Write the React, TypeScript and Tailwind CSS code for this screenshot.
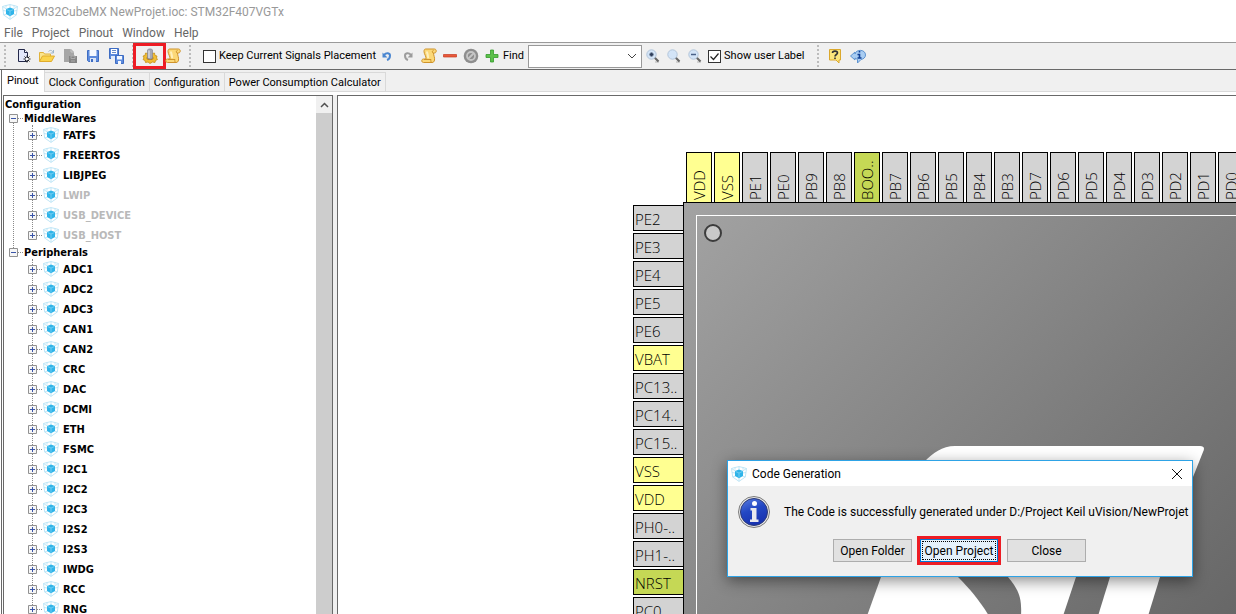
import { useState, type ReactNode } from 'react';
import { clsx } from 'clsx';

const menus = ['File', 'Project', 'Pinout', 'Window', 'Help'];

const tabs = ['Pinout', 'Clock Configuration', 'Configuration', 'Power Consumption Calculator'];

const tree = [
  {
    name: 'MiddleWares',
    items: ['FATFS', 'FREERTOS', 'LIBJPEG', 'LWIP', 'USB_DEVICE', 'USB_HOST'],
    disabled: ['LWIP', 'USB_DEVICE', 'USB_HOST'],
  },
  {
    name: 'Peripherals',
    items: [
      'ADC1', 'ADC2', 'ADC3', 'CAN1', 'CAN2', 'CRC', 'DAC', 'DCMI', 'ETH', 'FSMC',
      'I2C1', 'I2C2', 'I2C3', 'I2S2', 'I2S3', 'IWDG', 'RCC', 'RNG',
    ],
    disabled: [],
  },
];

const topPins = [
  'VDD', 'VSS', 'PE1', 'PE0', 'PB9', 'PB8', 'BOO..', 'PB7', 'PB6', 'PB5',
  'PB4', 'PB3', 'PD7', 'PD6', 'PD5', 'PD4', 'PD3', 'PD2', 'PD1', 'PD0',
];

const leftPins = [
  'PE2', 'PE3', 'PE4', 'PE5', 'PE6', 'VBAT', 'PC13..', 'PC14..', 'PC15..',
  'VSS', 'VDD', 'PH0-..', 'PH1-..', 'NRST', 'PC0',
];

function pinColor(name: string) {
  if (['VDD', 'VSS', 'VBAT'].includes(name)) return 'bg-[#ffff91]';
  if (['BOO..', 'NRST'].includes(name)) return 'bg-[#c5d855]';
  return 'bg-[#d3d3d3]';
}

function CubeIcon() {
  return (
    <svg width="16" height="16" viewBox="0 0 16 16" fill="none" className="shrink-0">
      <path d="M.5 2.500 4 1.500 8 .6l4 .9 3.500 1-1.200 8.500L8 15.400 1.700 11z" stroke="#b9e3f5" strokeWidth=".9" />
      <path d="M.5 2.500 4.500 5M15.500 2.500 11.500 5M8 .7v3M8 12v3.300M1.700 11l2.800-1M14.300 11l-2.800-1M1 6.500l3 .5M15 6.500l-3 .5M4 1.500v2M12 1.500v2" stroke="#b9e3f5" strokeWidth=".9" />
      <path d="M8 3.500 12 5v5L8 12.300 4 10V5z" fill="#2fb4e9" />
      <path d="M4.500 5.500 8 7l3.500-1.500M8 7v4.500" stroke="#7fd2f2" strokeWidth=".8" />
    </svg>
  );
}

function NewIcon() {
  return (
    <svg width="16" height="16" viewBox="0 0 16 16" fill="none">
      <path d="M2.500 1.500h6l3 3v9h-9z" fill="#e3e8fa" stroke="#23284a" />
      <path d="M8.500 1.500v3h3" fill="#fff" stroke="#23284a" />
      <path d="M11 7.500v7M7.500 11h7M8.500 8.500l5 5M13.500 8.500l-5 5" stroke="#222" />
      <circle cx="11" cy="11" r="1.300" fill="#fff" />
    </svg>
  );
}

function FolderIcon() {
  return (
    <svg width="18" height="16" viewBox="0 0 18 16" fill="none">
      <path d="M1.500 13V4.500h4l1 1.500h6v2" fill="#fbe58d" stroke="#e0b23a" />
      <path d="M1.500 13.500 4.500 8h12l-3 5.500z" fill="#fbd44c" stroke="#e0ac2c" />
      <path d="M10.500 3.500c2-2 4-1 4.500 1M15.500 2v3h-3" stroke="#9db5c9" />
    </svg>
  );
}

function ReportIcon() {
  return (
    <svg width="16" height="16" viewBox="0 0 16 16" fill="none">
      <path d="M2 1h7l3 3v10H2z" fill="#a6a6a6" />
      <path d="M9 1v3h3" stroke="#c9c9c9" />
      <path d="M7 8h8v7H7z" fill="#858585" />
      <path d="M9 8h4v2.500H9zM9 13h4" stroke="#adadad" />
    </svg>
  );
}

function SaveIcon() {
  return (
    <svg width="14" height="14" viewBox="0 0 14 14" fill="none">
      <path d="M1.500 1.500h11v11h-10l-1-1z" fill="#5d8bdd" stroke="#3e6cc2" />
      <path d="M3.500 1h7v6h-7z" fill="#f5f9ff" />
      <path d="M4 9h6v4H4z" fill="#dce6f7" />
      <path d="M5 10h2v3H5z" fill="#3e6cc2" />
    </svg>
  );
}

function SaveAllIcon() {
  return (
    <svg width="16" height="16" viewBox="0 0 16 16" fill="none">
      <path d="M1.500.5h9v10h-9z" fill="#5d8bdd" stroke="#3e6cc2" />
      <path d="M3 1h6v5H3z" fill="#fff" />
      <path d="M4 2.500h4M4 4.500h4" stroke="#6a8cc8" />
      <path d="M3 8h5v3H3z" fill="#e3ecfa" />
      <path d="M7.500 7.500h8v8h-8z" fill="#5d8bdd" stroke="#3e6cc2" />
      <path d="M9 8h5v3.500H9zM10 13h3v3h-3z" fill="#f5f9ff" />
    </svg>
  );
}

function GearIcon() {
  return (
    <svg width="16" height="16" viewBox="0 0 16 16" fill="none">
      <path
        d="m1 8 2-.5L3.500 5l2.500.5L8 4l2 1.500 2.500-.5.5 2.500L15 8l-.5 2 1 1.500-2 1-.5 2-2.500-.5L8 15.500 6 14l-2.500.5-.5-2-2-1L2 10z"
        fill="#f0bd34"
        stroke="#c48f16"
        strokeWidth=".8"
      />
      <ellipse cx="8" cy="10" rx="3.500" ry="2" fill="#b47f18" />
      <path d="M5.500 2c0-1.500 5-1.500 5 0v8c0 1.500-5 1.500-5 0z" fill="#a7a9b5" stroke="#858795" strokeWidth=".7" />
      <path d="M7 2.500v7.500" stroke="#e2e3ea" strokeWidth="1.200" />
    </svg>
  );
}

function ScrollIcon() {
  return (
    <svg width="16" height="16" viewBox="0 0 16 16" fill="none">
      <path d="M4.500 1h9c2.300 0 2.300 4 0 4H12.500c0 2.500 1.500 4.500 1 7-.3 1.700-1 2.500-2.500 2.500H2.500c-2.300 0-2.300-3.500 0-3.500H5c.5-2.500-2-5-2-7.500C3 2 3.500 1 4.500 1z" fill="#fbd878" stroke="#cf932a" />
      <path d="M12.500 5c-1.700 0-1.500-2.500 0-2.500M3 11.500h7c-.5 1.500 0 3 1 3" stroke="#cf932a" />
      <path d="M6 3.500c0 2 1.500 4 1 6.500" stroke="#fff0bd" strokeWidth="2" />
    </svg>
  );
}

function TurnIcon({ redo }: { redo?: boolean }) {
  return (
    <svg width="10" height="10" viewBox="0 0 10 10" fill="none" className={clsx(redo && '-scale-x-100')}>
      <path d="M2 4c2.500-3 6-2 6 .5C8 7 6.500 8.500 5 9" stroke={redo ? '#9c9c9c' : '#4a86d0'} strokeWidth="2" />
      <path d="M.5 1.500V6.500h5z" fill={redo ? '#9c9c9c' : '#4a86d0'} />
    </svg>
  );
}

function MinusIcon() {
  return (
    <svg width="14" height="14" viewBox="0 0 14 14">
      <path d="M.5 5.500h13v2.500H.5z" fill="#e8593a" stroke="#c73a20" strokeWidth=".7" />
    </svg>
  );
}

function ForbiddenIcon() {
  return (
    <svg width="16" height="16" viewBox="0 0 16 16" fill="none">
      <circle cx="8" cy="8" r="7.300" fill="#8e8e8e" />
      <circle cx="8" cy="8" r="4" stroke="#c6c6c6" strokeWidth="1.800" />
      <path d="m5 11 6-6" stroke="#c6c6c6" strokeWidth="1.800" />
    </svg>
  );
}

function PlusIcon() {
  return (
    <svg width="14" height="14" viewBox="0 0 14 14">
      <path d="M5.500 1h3v4.500H13v3H8.500V13h-3V8.500H1v-3h4.500z" fill="#5cc04a" stroke="#339a2c" strokeWidth=".8" />
    </svg>
  );
}

function ZoomIcon({ kind }: { kind: 'in' | 'fit' | 'out' }) {
  return (
    <svg width="14" height="14" viewBox="0 0 14 14" fill="none">
      <path d="M9 13h4" stroke="#c9c9c9" strokeWidth="1.500" />
      <path d="m8.500 8.500 4 4" stroke="#666" strokeWidth="2.200" />
      <circle cx="5.500" cy="5.500" r="4.700" fill="#d3e4f7" stroke="#b3c5da" />
      {kind === 'in' && <path d="M5.500 3.500v4M3.500 5.500h4" stroke="#2f3f5c" strokeWidth="2" />}
      {kind === 'out' && <path d="M3 5.500h5" stroke="#4a6288" strokeWidth="1.500" />}
    </svg>
  );
}

function HelpIcon() {
  return (
    <svg width="14" height="16" viewBox="0 0 14 16" fill="none">
      <path d="M1.500 1.500h11v10.500H11v3l-3-3H1.500z" fill="#fbe57c" stroke="#dba82c" />
      <path d="M4.500 5c0-2.500 5-2.500 5 0 0 1.500-2.500 1.500-2.500 3.500M7 9.500v1.500" stroke="#333" strokeWidth="1.600" />
    </svg>
  );
}

function AboutIcon() {
  return (
    <svg width="16" height="16" viewBox="0 0 16 16" fill="none">
      <path d="M.5 8 5 4v2C6 1 15.500 1 15.500 7c0 2.500-2 4-4.500 4.500L7.500 15v-3.500L5 10v2z" fill="#a9cdf2" stroke="#5d92cf" />
      <path d="M9.500 3v1.600M7.500 6.500h2V10M7.500 10h4" stroke="#123f94" strokeWidth="1.600" />
    </svg>
  );
}

function InfoIcon() {
  return (
    <svg width="32" height="32" viewBox="0 0 32 32" className="shrink-0">
      <defs>
        <linearGradient id="info" x1="0" y1="0" x2="0.400" y2="1">
          <stop offset="0" stopColor="#5c7fe0" />
          <stop offset="0.500" stopColor="#2348c4" />
          <stop offset="1" stopColor="#1833b0" />
        </linearGradient>
      </defs>
      <circle cx="16" cy="16" r="15.500" fill="#e6e6e6" stroke="#7c7c7c" />
      <circle cx="16" cy="16" r="13.500" fill="url(#info)" stroke="#2c3a78" />
      <circle cx="16.500" cy="7.500" r="2.500" fill="#fff" />
      <path d="M12.500 12h6v11.500h2V26h-8.500v-2.500h2v-9h-1.500z" fill="#e8e8ee" />
    </svg>
  );
}

function Grip() {
  return (
    <div className="flex w-[2px] shrink-0 flex-col gap-[2px]">
      {[0, 1, 2, 3, 4, 5].map((n) => (
        <span key={n} className="h-[2px] w-[2px] bg-[#bcbcbc]" />
      ))}
    </div>
  );
}

function ToolButton({ label, narrow, marked, children }: { label: string; narrow?: boolean; marked?: boolean; children: ReactNode }) {
  return (
    <button
      aria-label={label}
      className={clsx('relative flex h-[26px] shrink-0 items-center justify-center', narrow ? 'w-[21px]' : 'w-[23px]')}
    >
      {children}
      {marked && <span className="absolute -inset-x-[5px] inset-y-0 border-3 border-[#ed1c24]" />}
    </button>
  );
}

function Check({ label, checked, onChange }: { label: string; checked: boolean; onChange: () => void }) {
  return (
    <label className="flex shrink-0 items-center gap-[3px] whitespace-nowrap">
      <span className="grid">
        <input
          type="checkbox"
          checked={checked}
          onChange={onChange}
          className="col-start-1 row-start-1 h-[13px] w-[13px] appearance-none border border-[#333] bg-white"
        />
        {checked && (
          <svg width="13" height="13" viewBox="0 0 13 13" fill="none" className="pointer-events-none col-start-1 row-start-1">
            <path d="m2.500 6.500 3 3 5-6" stroke="#222" strokeWidth="1.200" />
          </svg>
        )}
      </span>
      {label}
    </label>
  );
}

function Expander({ open }: { open?: boolean }) {
  return (
    <svg width="9" height="9" viewBox="0 0 9 9" fill="none" className="relative shrink-0">
      <path d="M.5.5h8v8h-8z" fill="#f6f6f6" stroke="#919191" />
      <path d="M2 4.500h5" stroke="#3a55a8" />
      {!open && <path d="M4.500 2v5" stroke="#3a55a8" />}
    </svg>
  );
}

function Tree() {
  return (
    <div className="min-w-0 flex-1 overflow-hidden pt-px pl-px font-['DejaVu_Sans_Condensed','DejaVu_Sans',sans-serif] text-[11px] font-bold">
      <div className="h-[14px] leading-[16px]">Configuration</div>
      <ul>
        {tree.map((group, i) => (
          <li key={group.name} className="relative">
            {i < tree.length - 1 && <span className="absolute top-[7px] -bottom-[7px] left-[8px] border-l border-dotted border-[#8a8a8a]" />}
            <div className="flex h-[14px] items-center pl-[4px] leading-[14px]">
              <Expander open />
              <span className="mr-px w-[5px] border-t border-dotted border-[#8a8a8a]" />
              <span className="pt-px">{group.name}</span>
            </div>
            <ul className="relative">
              <span className="absolute top-0 bottom-[10px] left-[27px] border-l border-dotted border-[#8a8a8a]" />
              {group.items.map((item) => (
                <li
                  key={item}
                  className={clsx('flex h-5 items-center pl-[23px]', group.disabled.includes(item) && 'text-[#b9b9b9]')}
                >
                  <Expander />
                  <span className="mr-px w-[5px] border-t border-dotted border-[#8a8a8a]" />
                  <CubeIcon />
                  <span className="ml-1 pt-[2px] leading-4">{item}</span>
                </li>
              ))}
            </ul>
          </li>
        ))}
      </ul>
    </div>
  );
}

function Chip() {
  return (
    <div className="grid min-w-0 flex-1 grid-cols-[50px_1fr] grid-rows-[50px_1fr] overflow-hidden bg-white pt-[56px] pl-[295px] font-['Open_Sans','Noto_Sans',sans-serif] text-[15px] font-light">
      <div className="col-start-2 flex gap-[2px] overflow-hidden pl-[3px]">
        {topPins.map((pin) => (
          <div
            key={pin}
            className={clsx('flex w-[26px] shrink-0 rotate-180 items-center border border-t-0 border-black pt-[2px] leading-[22px] [writing-mode:vertical-rl]', pinColor(pin))}
          >
            {pin}
          </div>
        ))}
      </div>
      <div className="flex flex-col gap-[2px] overflow-hidden pt-[3px]">
        {leftPins.map((pin) => (
          <div
            key={pin}
            className={clsx('h-[26px] shrink-0 border border-r-0 border-black pl-px leading-[26px]', pinColor(pin))}
          >
            {pin}
          </div>
        ))}
      </div>
      <div className="relative overflow-hidden border-t border-l border-black bg-linear-135 from-[#a3a3a3] to-[#676767] pt-3 pl-3">
        <div className="h-full border-t border-l border-white pt-2 pl-[7px]">
          <div className="h-[18px] w-[18px] rounded-full border-2 border-[#3c3c3c] bg-[#c9c9c9]" />
        </div>
        <svg width="340" height="170" viewBox="866 446 340 170" fill="#fff" className="absolute top-[243px] left-[182px]">
          <path d="M924 462c9-9 18-16 31-16h245c4 0 5 2 3 6l-12 30H910z" />
          <path d="M881 577h77c12 12 22 24 31 39H867z" />
          <path d="M1008 577h68l-13 39h-42c1-18-2-26-13-39z" />
          <path d="M1110 577h50l-12 39h-50z" />
        </svg>
      </div>
    </div>
  );
}

function Dialog() {
  return (
    <div
      role="dialog"
      aria-labelledby="dialog-title"
      className="absolute right-[43px] bottom-[37px] w-[466px] border border-[#2ea3e6] bg-[#f0f0f0] font-[Roboto,'Noto_Sans',sans-serif] text-[12px] shadow-[0_4px_14px_rgba(0,0,0,0.45)]"
    >
      <div className="flex h-[25px] items-center bg-white pr-[9px] pl-[3px]">
        <CubeIcon />
        <h2 id="dialog-title" className="ml-[5px] flex-1">Code Generation</h2>
        <button aria-label="Close dialog">
          <svg width="12" height="12" viewBox="0 0 12 12" stroke="#111">
            <path d="m1 1 10 10M11 1 1 11" />
          </svg>
        </button>
      </div>
      <div className="flex h-[52px] items-center pl-[10px]">
        <InfoIcon />
        <p className="ml-[14px] whitespace-nowrap">The Code is successfully generated under D:/Project Keil uVision/NewProjet</p>
      </div>
      <div className="flex h-[38px] items-start justify-center pr-px">
        <button className="mt-px h-[23px] w-[79px] border border-[#adadad] bg-[#e1e1e1] whitespace-nowrap">Open Folder</button>
        <button className="-mt-[2px] mr-[6px] ml-[5px] border-3 border-[#ed1c24] bg-[#e5f1fb] whitespace-nowrap">
          <span className="flex h-[23px] w-[78px] items-center justify-center border border-[#0078d7] p-px">
            <span className="flex h-full w-full items-center justify-center border border-dotted border-black">Open Project</span>
          </span>
        </button>
        <button className="mt-px h-[23px] w-[79px] border border-[#adadad] bg-[#e1e1e1]">Close</button>
      </div>
    </div>
  );
}

export default function App() {
  const [keepPlacement, setKeepPlacement] = useState(false);
  const [userLabel, setUserLabel] = useState(true);
  const [activeTab, setActiveTab] = useState('Pinout');

  return (
    <div className="relative flex h-screen flex-col overflow-hidden bg-white font-[Roboto,'Noto_Sans',sans-serif] text-[11px] text-black">
      {/* Title and menu */}
      <header className="h-[42px] shrink-0 text-[12px]">
        <div className="flex h-6 items-center pl-[2px] text-[#999]">
          <CubeIcon />
          <h1 className="ml-[5px]">STM32CubeMX NewProjet.ioc: STM32F407VGTx</h1>
        </div>
        <nav className="flex h-[18px] items-center gap-[9px] pl-1 text-[#666]">
          {menus.map((menu) => (
            <button key={menu}>{menu}</button>
          ))}
        </nav>
      </header>

      {/* Toolbar */}
      <div className="flex h-7 shrink-0 items-center border-t border-b border-t-[#9a9a9a] border-b-[#696969] bg-[#f0f0f0] pl-1">
        <Grip />
        <div className="mr-[5px] ml-[6px] flex">
          <ToolButton label="New project"><NewIcon /></ToolButton>
          <ToolButton label="Open project"><FolderIcon /></ToolButton>
          <ToolButton label="Import project"><ReportIcon /></ToolButton>
          <ToolButton label="Save"><SaveIcon /></ToolButton>
          <ToolButton label="Save all"><SaveAllIcon /></ToolButton>
        </div>
        <Grip />
        <div className="mr-[5px] ml-[4px] flex">
          <ToolButton label="Generate code" marked><GearIcon /></ToolButton>
          <ToolButton label="Generate report"><ScrollIcon /></ToolButton>
        </div>
        <Grip />
        <div className="ml-[12px]">
          <Check label="Keep Current Signals Placement" checked={keepPlacement} onChange={() => setKeepPlacement(!keepPlacement)} />
        </div>
        <ToolButton label="Undo" narrow><TurnIcon /></ToolButton>
        <ToolButton label="Redo" narrow><TurnIcon redo /></ToolButton>
        <ToolButton label="Report" narrow><ScrollIcon /></ToolButton>
        <ToolButton label="Remove" narrow><MinusIcon /></ToolButton>
        <ToolButton label="Clear" narrow><ForbiddenIcon /></ToolButton>
        <ToolButton label="Add" narrow><PlusIcon /></ToolButton>
        <label htmlFor="find" className="mr-1 ml-px">Find</label>
        <div className="grid shrink-0 items-center">
          <select id="find" className="col-start-1 row-start-1 h-[23px] w-[114px] appearance-none border border-[#999] bg-white" />
          <svg width="10" height="6" viewBox="0 0 10 6" fill="none" stroke="#444" className="pointer-events-none col-start-1 row-start-1 mr-[5px] justify-self-end">
            <path d="m1 1 4 4 4-4" />
          </svg>
        </div>
        <ToolButton label="Zoom in" narrow><ZoomIcon kind="in" /></ToolButton>
        <ToolButton label="Best fit" narrow><ZoomIcon kind="fit" /></ToolButton>
        <ToolButton label="Zoom out" narrow><ZoomIcon kind="out" /></ToolButton>
        <div className="mr-[12px] ml-[3px]">
          <Check label="Show user Label" checked={userLabel} onChange={() => setUserLabel(!userLabel)} />
        </div>
        <Grip />
        <div className="ml-[5px] flex">
          <ToolButton label="Help"><HelpIcon /></ToolButton>
          <ToolButton label="About"><AboutIcon /></ToolButton>
        </div>
      </div>

      <div className="ml-px flex min-h-0 flex-1 flex-col border-l border-[#696969]">
        {/* Tabs */}
        <div role="tablist" className="flex h-[22px] shrink-0 items-end border-b border-[#d9d9d9] bg-[#f0f0f0]">
          {tabs.map((tab) => (
            <button
              key={tab}
              role="tab"
              aria-selected={tab === activeTab}
              onClick={() => setActiveTab(tab)}
              className={clsx(
                'border-r border-[#d9d9d9] whitespace-nowrap',
                tab === activeTab ? '-mb-px h-[22px] bg-white px-[5px]' : 'h-[19px] border-t px-1 pt-[2px]',
              )}
            >
              {tab}
            </button>
          ))}
        </div>

        <main className="flex min-h-0 flex-1 pt-[3px] pl-px">
          <div className="flex w-[330px] shrink-0 border-t border-r border-l border-[#696969]">
            <Tree />
            <div className="flex w-[16px] flex-col bg-[#cdcdcd]">
              <button aria-label="Scroll up" className="flex h-[17px] items-center justify-center bg-[#f0f0f0]">
                <svg width="9" height="6" viewBox="0 0 9 6" fill="none" stroke="#505050" strokeWidth="1.500">
                  <path d="m1 5 3.500-3.500L8 5" />
                </svg>
              </button>
            </div>
          </div>
          <div className="w-1 shrink-0 bg-[#f0f0f0]" />
          <div className="flex min-w-0 flex-1 border-t border-l border-[#696969]">
            <Chip />
          </div>
        </main>
      </div>

      <Dialog />
    </div>
  );
}
